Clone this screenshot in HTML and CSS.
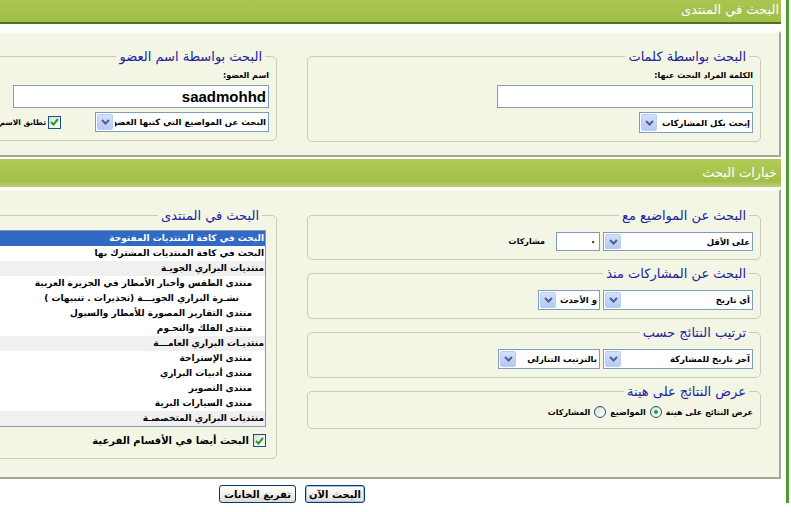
FILE: index.html
```html
<!DOCTYPE html>
<html lang="ar" dir="rtl">

<head>
    <meta charset="UTF-8" />
    <title>البحث في المنتدى</title>
    <link rel="stylesheet" href="styles.css">
</head>

<body>
    <div class="frame">
        <form class="search-form" onsubmit="return false">
            <div class="tcat tcat-first">البحث في المنتدى</div>

            <div class="panel panel-first">
                <div class="cols">
                    <!-- keywords -->
                    <fieldset class="fieldset fs-top">
                        <legend>البحث بواسطة كلمات</legend>
                        <label class="field-label" for="query">الكلمة المراد البحث عنها:</label>
                        <input type="text" class="bginput" id="query">
                        <div class="row">
                            <span class="sel w114"><select><option>إبحث بكل المشاركات</option></select><i class="arrow"><svg width="9" height="6" viewBox="0 0 9 6"><path d="M1 1l3.5 3.5L8 1" fill="none" stroke="#4d6185" stroke-width="2"/></svg></i></span>
                        </div>
                    </fieldset>

                    <!-- member name -->
                    <fieldset class="fieldset fs-top">
                        <legend>البحث بواسطة اسم العضو</legend>
                        <label class="field-label" for="username">اسم العضو:</label>
                        <input type="text" class="bginput member-input" id="username" value="saadmohhd">
                        <div class="row">
                            <span class="sel w174"><select><option>البحث عن المواضيع التي كتبها العضو</option></select><i class="arrow"><svg width="9" height="6" viewBox="0 0 9 6"><path d="M1 1l3.5 3.5L8 1" fill="none" stroke="#4d6185" stroke-width="2"/></svg></i></span>
                            <span class="check-label exact-name"><span class="cb"><svg width="9" height="8" viewBox="0 0 9 8"><path d="M1 4l2.5 2.5L8 1" fill="none" stroke="#21a121" stroke-width="2"/></svg></span>تطابق الاسم</span>
                        </div>
                    </fieldset>
                </div>
            </div>

            <div class="tcat">خيارات البحث</div>

            <div class="panel panel-second">
                <div class="cols">
                    <div class="col">
                        <fieldset class="fieldset fs-opt">
                            <legend>البحث عن المواضيع مع</legend>
                            <div class="row">
                                <span class="sel w150"><select><option>على الأقل</option></select><i class="arrow"><svg width="9" height="6" viewBox="0 0 9 6"><path d="M1 1l3.5 3.5L8 1" fill="none" stroke="#4d6185" stroke-width="2"/></svg></i></span>
                                <input type="text" class="num-input" value="٠">
                                <span class="inline-label">مشاركات</span>
                            </div>
                        </fieldset>

                        <fieldset class="fieldset fs-opt">
                            <legend>البحث عن المشاركات منذ</legend>
                            <div class="row">
                                <span class="sel w150 h20"><select><option>أي تاريخ</option></select><i class="arrow"><svg width="9" height="6" viewBox="0 0 9 6"><path d="M1 1l3.5 3.5L8 1" fill="none" stroke="#4d6185" stroke-width="2"/></svg></i></span>
                                <span class="sel w62"><select><option>و الأحدث</option></select><i class="arrow"><svg width="9" height="6" viewBox="0 0 9 6"><path d="M1 1l3.5 3.5L8 1" fill="none" stroke="#4d6185" stroke-width="2"/></svg></i></span>
                            </div>
                        </fieldset>

                        <fieldset class="fieldset fs-opt">
                            <legend>ترتيب النتائج حسب</legend>
                            <div class="row">
                                <span class="sel w150 h20"><select><option>آخر تاريخ للمشاركة</option></select><i class="arrow"><svg width="9" height="6" viewBox="0 0 9 6"><path d="M1 1l3.5 3.5L8 1" fill="none" stroke="#4d6185" stroke-width="2"/></svg></i></span>
                                <span class="sel w102"><select><option>بالترتيب التنازلي</option></select><i class="arrow"><svg width="9" height="6" viewBox="0 0 9 6"><path d="M1 1l3.5 3.5L8 1" fill="none" stroke="#4d6185" stroke-width="2"/></svg></i></span>
                            </div>
                        </fieldset>

                        <fieldset class="fieldset fs-opt fs-last">
                            <legend>عرض النتائج على هينة</legend>
                            <div class="row radio-row">
                                <span>عرض النتائج على هينة</span>
                                <span class="radio checked"></span><span>المواضيع</span>
                                <span class="radio"></span><span>المشاركات</span>
                            </div>
                        </fieldset>
                    </div>

                    <div class="col">
                        <fieldset class="fieldset fs-forum">
                            <legend>البحث في المنتدى</legend>
                            <div class="listbox">
                                <div class="opt selected">البحث في كافة المنتديات المفتوحة</div>
                                <div class="opt">البحث في كافة المنتديات المشترك بها</div>
                                <div class="opt cat">منتديات البراري الجويـة</div>
                                <div class="opt sub">منتدى الطقس وأخبار الأمطار في الجزيرة العربية</div>
                                <div class="opt sub2">نشـرة البراري الجويـــة (تحذيرات . تنبيهات )</div>
                                <div class="opt sub">منتدى التقارير المصورة للأمطار والسيول</div>
                                <div class="opt sub">منتدى الفلك والتجـوم</div>
                                <div class="opt cat">منتديـات البراري العامـــة</div>
                                <div class="opt sub">منتدى الإستراحة</div>
                                <div class="opt sub">منتدى أدبيات البراري</div>
                                <div class="opt sub">منتدى التصوير</div>
                                <div class="opt sub">منتدى السيارات البرية</div>
                                <div class="opt cat">منتديات البراري المتخصصـة</div>
                            </div>
                            <div class="check-label child-forums"><span class="cb"><svg width="9" height="8" viewBox="0 0 9 8"><path d="M1 4l2.5 2.5L8 1" fill="none" stroke="#21a121" stroke-width="2"/></svg></span>البحث أيضا في الأقسام الفرعية</div>
                        </fieldset>
                    </div>
                </div>
            </div>

            <div class="buttons">
                <button type="submit" class="button button-default">البحث الآن</button>
                <button type="reset" class="button button-reset">تفريغ الخانات</button>
            </div>
        </form>
    </div>
</body>

</html>
```

FILE: styles.css
```css
* {
    box-sizing: border-box;
}

html {
    overflow: hidden;
}

body {
    margin: 0;
    background: #fff;
    color: #000;
    font: bold 10px "DejaVu Sans", sans-serif;
}

/* outer frame, wider than the window: rtl pushes the overflow to the left */
.frame {
    width: 986px;
    margin-right: 2px;
    border-right: 3px solid #4f9a2e;
    padding-right: 5px;
}

.search-form {
    width: 978px;
}

/* green category bars */
.tcat {
    height: 28px;
    margin-top: 2px;
    padding: 0 4px;
    line-height: 28px;
    color: #fff;
    font-size: 13px;
    font-weight: normal;
    background: linear-gradient(#b0cb57, #a2c048 80%, #bcd27a);
}

.tcat-first {
    height: 24px;
    margin-top: 0;
    padding-right: 2px;
    line-height: 20px;
    border-bottom: 2px solid #4b721c;
    background: linear-gradient(#a9c652, #a0bf47);
}

.panel {
    margin-top: 2px;
    padding: 15px 18px 13px;
    background: #f3f6e5;
    border: 2px solid;
    border-color: #fbfcf5 #a5a898 #a5a898 #fbfcf5;
}

.panel-first {
    margin-top: 7px;
}

.panel-second {
    padding-top: 16px;
    padding-bottom: 18px;
}

.cols {
    display: grid;
    grid-template-columns: 454px 454px;
    column-gap: 30px;
    align-items: start;
}

.fieldset {
    margin: 0;
    min-width: 0;
    padding: 4px 7px 8px;
    border: 1px solid #c9ccbd;
    border-radius: 5px;
}

.fieldset legend {
    margin-right: 4px;
    padding: 0 3px;
    color: #22229c;
    font: 13px/17px "DejaVu Sans", sans-serif;
}

.field-label {
    display: block;
    margin-bottom: 3px;
    font-size: 8px;
    line-height: 13px;
}

.bginput {
    display: block;
    width: 256px;
    height: 23px;
    padding: 0 2px;
    border: 1px solid #7f9db9;
    background: #fff;
    font: bold 15px "Liberation Sans", sans-serif;
}

.row {
    display: flex;
    align-items: center;
    gap: 3px;
    margin-top: 4px;
}

/* selects with the blue arrow box */
.sel {
    position: relative;
    display: inline-block;
    height: 20px;
}

.sel select {
    -webkit-appearance: none;
    appearance: none;
    width: 100%;
    height: 100%;
    padding: 0 2px 0 19px;
    border: 1px solid #7f9db9;
    border-radius: 0;
    background: #fff;
    color: #000;
    font: bold 8.5px "DejaVu Sans", sans-serif;
}

.sel .arrow {
    position: absolute;
    left: 2px;
    top: 2px;
    bottom: 2px;
    width: 16px;
    display: flex;
    align-items: center;
    justify-content: center;
    border: 1px solid #bccdf5;
    border-radius: 2px;
    background: linear-gradient(#d3e0fd, #b3c9f7);
    pointer-events: none;
}

.w62 { width: 62px; }
.w102 { width: 102px; }
.w114 { width: 114px; height: 21px; }
.w150 { width: 150px; height: 19px; }
.w174 { width: 174px; }
.h20 { height: 20px; }

.num-input {
    width: 44px;
    height: 19px;
    padding: 0 3px;
    border: 1px solid #7f9db9;
    font: bold 10px "DejaVu Sans", sans-serif;
}

.inline-label {
    margin-right: 8px;
    font-size: 8px;
}

.check-label {
    display: inline-flex;
    align-items: center;
    gap: 4px;
}

.cb {
    width: 13px;
    height: 13px;
    flex: none;
    display: inline-flex;
    align-items: center;
    justify-content: center;
    border: 1px solid #1c5180;
    background: linear-gradient(135deg, #dcdcd7, #fff);
}

.exact-name {
    margin-right: 31px;
    gap: 2px;
    font-size: 7.5px;
    white-space: nowrap;
}

.fs-opt {
    margin-bottom: 5px;
    padding: 4px 7px 8px;
}

.fs-last {
    padding-bottom: 10px;
}

.radio-row {
    gap: 4px;
    margin-top: 2px;
    font-size: 8px;
}

.radio {
    width: 12px;
    height: 12px;
    border: 1px solid #1c5180;
    border-radius: 50%;
    background: linear-gradient(135deg, #dcdcd7, #fff);
    display: inline-flex;
    align-items: center;
    justify-content: center;
}

.radio.checked::after {
    content: "";
    width: 4px;
    height: 4px;
    border-radius: 50%;
    background: #21a121;
}

/* forum list */
.fs-forum {
    padding: 6px 10px 11px 7px;
}

.listbox {
    width: 380px;
    padding: 0;
    border: 1px solid #7f9db9;
    background: #fff;
}

.opt {
    height: 15px;
    line-height: 15px;
    padding-right: 1px;
    font-size: 9px;
    white-space: nowrap;
}

.opt.selected {
    background: #316ac5;
    color: #fff;
}

.opt.cat {
    background: #f0f0f0;
}

.opt.sub {
    padding-right: 13px;
}

.opt.sub2 {
    padding-right: 26px;
}

.child-forums {
    display: flex;
    margin-top: 7px;
}

.buttons {
    display: flex;
    justify-content: center;
    gap: 9px;
    margin-top: 6px;
}

.button {
    height: 18px;
    padding: 0;
    border: 1px solid #003c74;
    border-radius: 3px;
    background: linear-gradient(#fff, #f0efe8 60%, #dcdbd2);
    color: #000;
    font: bold 10px "DejaVu Sans", sans-serif;
}

.button-default {
    width: 60px;
    box-shadow: inset 0 0 0 1px #a8c4ec;
}

.button-reset {
    width: 77px;
}
```
